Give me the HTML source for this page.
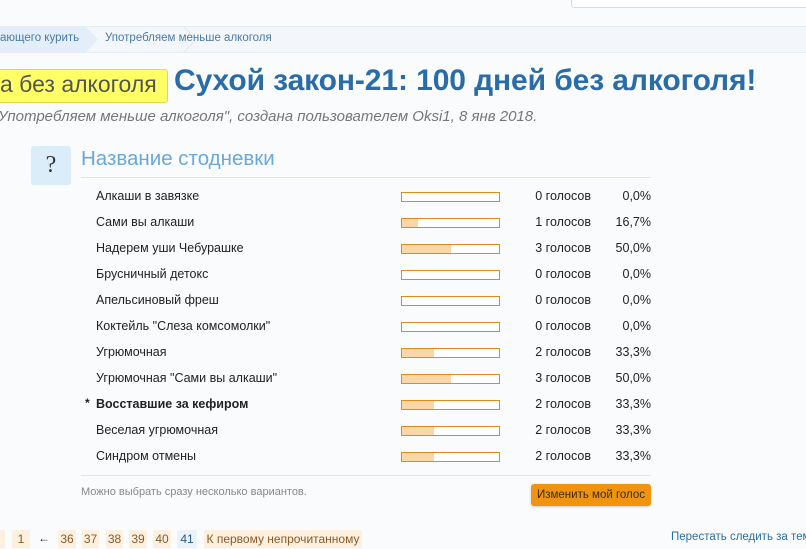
<!DOCTYPE html>
<html><head><meta charset="utf-8"><style>
body{margin:0;width:806px;height:549px;overflow:hidden;background:#fafbfd;font-family:"Liberation Sans","DejaVu Sans",sans-serif;position:relative}
.a{position:absolute;white-space:nowrap}
.bar{position:absolute;left:401px;width:97px;height:8px;border:1px solid #e08a1e;background:#fff}
.bar i{display:block;height:8px;background:#fad7a8}
.lab{position:absolute;left:96px;font-size:12.5px;color:#222}
.v{position:absolute;left:500px;width:91px;text-align:right;font-size:12.5px;color:#222}
.p{position:absolute;left:600px;width:51px;text-align:right;font-size:12.5px;color:#222}
.pg{position:absolute;top:530px;height:18px;line-height:18px;font-size:12px;color:#8a5a2a;background:#fdf0df;text-align:center;border-radius:2px}
</style></head><body>
<div class="a" style="left:571px;top:-2px;width:240px;height:8px;background:#fff;border:1px solid #d8dde3;border-radius:3px"></div>
<div class="a" style="left:0;top:26px;width:806px;height:25px;background:#f3f7fb;border-top:1px solid #e3edf5;border-bottom:1px solid #e3edf5"></div>
<svg class="a" style="left:0;top:27px" width="200" height="25"><path d="M0 0H86L98 12.5L86 25H0Z" fill="#e3eef8"/><path d="M184 0L196 12.5L184 25" fill="none" stroke="#dfe9f2"/></svg>
<div class="a" style="left:0;top:32px;font-size:11.5px;color:#4a7aa8">ающего курить</div>
<div class="a" style="left:105px;top:32px;font-size:11.5px;color:#4a7aa8">Употребляем меньше алкоголя</div>
<div class="a" style="left:-6px;top:69px;width:172px;height:32px;background:#ffff66;border:1px solid #e6d84a;border-radius:3px"></div>
<div class="a" style="left:0;top:71px;font-size:23px;color:#555">а без алкоголя</div>
<div class="a" style="left:174px;top:64px;font-size:30px;font-weight:bold;color:#2a6ca8;letter-spacing:-0.1px">Сухой закон-21: 100 дней без алкоголя!</div>
<div class="a" style="left:-2px;top:108px;font-size:15px;font-style:italic;color:#777">Употребляем меньше алкоголя", создана пользователем Oksi1, 8 янв 2018.</div>
<div class="a" style="left:31px;top:146px;width:40px;height:39px;background:#dcedfa;border-radius:3px;text-align:center;font-family:'Liberation Serif',serif;font-size:24px;line-height:39px;color:#333">?</div>
<div class="a" style="left:81px;top:147px;font-size:20.5px;color:#6aa8dc">Название стодневки</div>
<div class="a" style="left:81px;top:177px;width:570px;height:1px;background:#d5e8f5"></div>
<div class="a" style="left:81px;top:475px;width:570px;height:1px;background:#d5e8f5"></div>

<div class="lab" style="top:189px">Алкаши в завязке</div><div class="bar" style="top:192px"><i style="width:0"></i></div><div class="v" style="top:189px">0 голосов</div><div class="p" style="top:189px">0,0%</div>
<div class="lab" style="top:215px">Сами вы алкаши</div><div class="bar" style="top:218px"><i style="width:16px"></i></div><div class="v" style="top:215px">1 голосов</div><div class="p" style="top:215px">16,7%</div>
<div class="lab" style="top:241px">Надерем уши Чебурашке</div><div class="bar" style="top:244px"><i style="width:49px"></i></div><div class="v" style="top:241px">3 голосов</div><div class="p" style="top:241px">50,0%</div>
<div class="lab" style="top:267px">Брусничный детокс</div><div class="bar" style="top:270px"><i style="width:0"></i></div><div class="v" style="top:267px">0 голосов</div><div class="p" style="top:267px">0,0%</div>
<div class="lab" style="top:293px">Апельсиновый фреш</div><div class="bar" style="top:296px"><i style="width:0"></i></div><div class="v" style="top:293px">0 голосов</div><div class="p" style="top:293px">0,0%</div>
<div class="lab" style="top:319px">Коктейль "Слеза комсомолки"</div><div class="bar" style="top:322px"><i style="width:0"></i></div><div class="v" style="top:319px">0 голосов</div><div class="p" style="top:319px">0,0%</div>
<div class="lab" style="top:345px">Угрюмочная</div><div class="bar" style="top:348px"><i style="width:32px"></i></div><div class="v" style="top:345px">2 голосов</div><div class="p" style="top:345px">33,3%</div>
<div class="lab" style="top:371px">Угрюмочная "Сами вы алкаши"</div><div class="bar" style="top:374px"><i style="width:49px"></i></div><div class="v" style="top:371px">3 голосов</div><div class="p" style="top:371px">50,0%</div>
<div class="a" style="left:85px;top:396px;font-size:12px;font-weight:bold;color:#222">*</div>
<div class="lab" style="top:397px;font-weight:bold">Восставшие за кефиром</div><div class="bar" style="top:400px"><i style="width:32px"></i></div><div class="v" style="top:397px">2 голосов</div><div class="p" style="top:397px">33,3%</div>
<div class="lab" style="top:423px">Веселая угрюмочная</div><div class="bar" style="top:426px"><i style="width:32px"></i></div><div class="v" style="top:423px">2 голосов</div><div class="p" style="top:423px">33,3%</div>
<div class="lab" style="top:449px">Синдром отмены</div><div class="bar" style="top:452px"><i style="width:32px"></i></div><div class="v" style="top:449px">2 голосов</div><div class="p" style="top:449px">33,3%</div>

<div class="a" style="left:81px;top:486px;font-size:11px;color:#888">Можно выбрать сразу несколько вариантов.</div>
<div class="a" style="left:531px;top:484px;width:120px;height:22px;background:#f0940f;border-radius:3px;box-shadow:0 1px 2px rgba(0,0,0,.2);text-align:center;line-height:22px;font-size:11.5px;color:#3a2a10">Изменить мой голос</div>

<div class="pg" style="left:-4px;width:9px"></div>
<div class="pg" style="left:12px;width:18px">1</div>
<div class="a" style="left:38px;top:531px;font-size:12px;color:#333">←</div>
<div class="pg" style="left:58px;width:18px">36</div>
<div class="pg" style="left:82px;width:17px">37</div>
<div class="pg" style="left:106px;width:17px">38</div>
<div class="pg" style="left:129px;width:18px">39</div>
<div class="pg" style="left:153px;width:18px">40</div>
<div class="pg" style="left:177px;width:20px;background:#eaf3fb;color:#2a5a8a">41</div>
<div class="pg" style="left:204px;width:158px">К первому непрочитанному</div>
<div class="a" style="left:671px;top:531px;font-size:11.5px;color:#2a6ca8">Перестать следить за темой</div>
</body></html>
